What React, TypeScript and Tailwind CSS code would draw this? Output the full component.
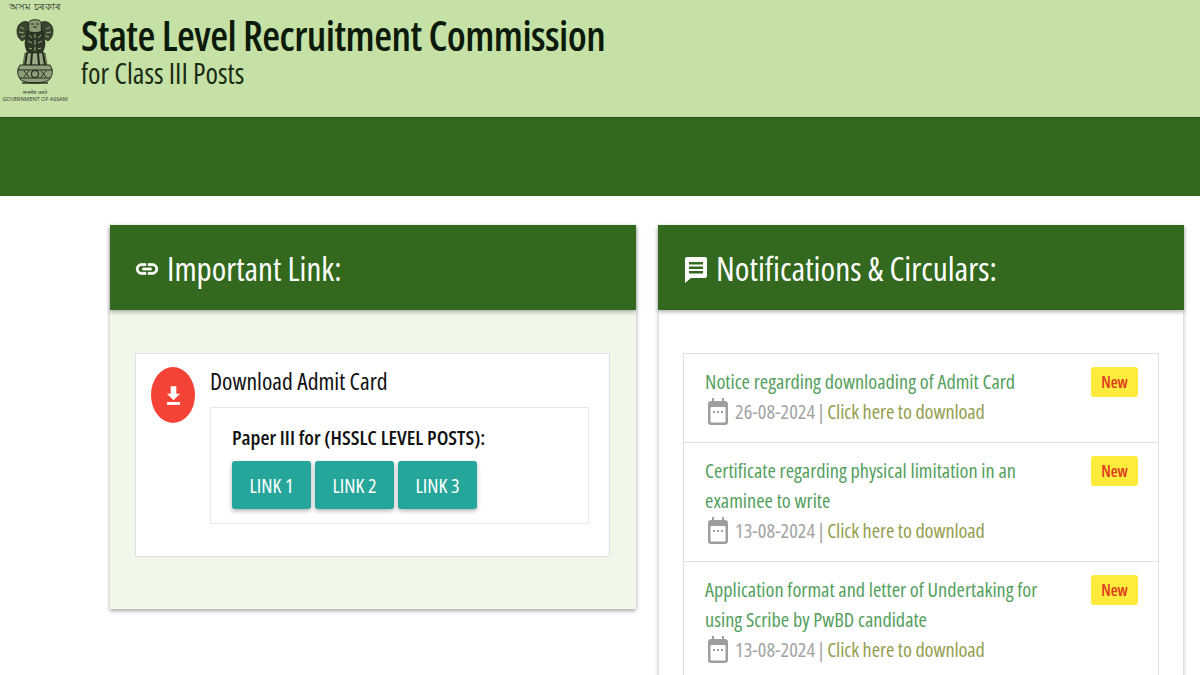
const notices = [
  { title: ["Notice regarding downloading of Admit Card"], date: "26-08-2024" },
  { title: ["Certificate regarding physical limitation in an", "examinee to write"], date: "13-08-2024" },
  { title: ["Application format and letter of Undertaking for", "using Scribe by PwBD candidate"], date: "13-08-2024" },
];

function Emblem() {
  return (
    <svg viewBox="0 0 38 70" className="w-[38px] h-[70px]" fill="none" stroke="#20291a">
      {/* lion heads */}
      <path d="M13 5c1-3 11-3 12 0l1 9-7 3-7-3z" fill="#8b9a76" strokeWidth="1" />
      <path d="M15 7h3M20 7h3M17 10h4" strokeWidth="1" />
      <path d="M12 5C6 3 1 8 1 14c0 5 2 8 5 10l6-4 1-9z" fill="#3a4530" strokeWidth="0.8" />
      <path d="M26 5c6-2 11 3 11 9 0 5-2 8-5 10l-6-4-1-9z" fill="#3a4530" strokeWidth="0.8" />
      <path d="M4 10l4 2M3 15l5 1M5 20l4-1M34 10l-4 2M35 15l-5 1M33 20l-4-1" stroke="#a9bb90" strokeWidth="0.8" />
      <path d="M11 14c2 2 14 2 16 0l2 12c0 4-2 8-3 11H12c-1-3-3-7-3-11z" fill="#2d3726" strokeWidth="0.8" />
      <path d="M13 18l3 3M19 17v4M25 18l-3 3M12 24l4 2M19 23v5M26 24l-4 2M13 31l3 1M19 30v4M25 31l-3 1" stroke="#a9bb90" strokeWidth="0.9" />
      {/* legs */}
      <path d="M9 36h20l2 12H7z" fill="#9aa986" strokeWidth="0.6" />
      <path d="M11 36L9 48M16 36l-1 12M22 36l1 12M27 36l2 12" strokeWidth="2" />
      {/* abacus */}
      <path d="M4 48h30l2 4c1 5-1 9-3 11-3 2-8 3-14 3S8 65 5 63c-2-2-4-6-3-11z" fill="#8f9e7b" strokeWidth="1" />
      <path d="M2 53h34M4 61h30" strokeWidth="1.2" />
      <path d="M8 54l5 6M30 54l-5 6M8 60l5-6M30 60l-5-6" strokeWidth="0.9" />
      <circle cx="19" cy="57" r="3.5" strokeWidth="1.1" />
      <path d="M6 66h26" strokeWidth="1.4" />
    </svg>
  );
}

function CalendarIcon() {
  return (
    <svg viewBox="0 0 20 27" className="w-[20px] h-[27px] shrink-0" fill="#9e9e9e">
      <path d="M4 0h2v3h8V0h2v3h1a3 3 0 0 1 3 3v18a3 3 0 0 1-3 3H3a3 3 0 0 1-3-3V6a3 3 0 0 1 3-3h1z" />
      <rect x="2.5" y="9" width="15" height="15.5" rx="1" fill="#fff" />
      <rect x="5" y="13" width="2" height="2" />
      <rect x="9" y="13" width="2" height="2" />
      <rect x="13" y="13" width="2" height="2" />
    </svg>
  );
}

export default function App() {
  return (
    <div className="w-[1200px] h-[675px] overflow-hidden bg-white font-['Open_Sans',sans-serif]">
      <header className="h-[117px] bg-[#c5e1a5] flex">
        <div className="w-[70px] shrink-0 flex flex-col items-center">
          <span className="text-[10px] leading-[13px] text-[#333] font-['Noto_Sans',sans-serif]">অসম চৰকাৰ</span>
          <div className="mt-[4px]"><Emblem /></div>
          <span className="text-[5px] leading-[6px] mt-[2px] text-[#333] font-['Noto_Sans',sans-serif]">सत्यमेव जयते</span>
          <span className="text-[5.5px] leading-[7px] mt-[1px] text-[#333] whitespace-nowrap [font-stretch:88%]">GOVERNMENT OF ASSAM</span>
        </div>
        <div className="pl-[11px] pt-[12px]">
          <h1 className="text-[41px] leading-[46px] tracking-[-0.57px] text-[#0c1a0a] font-[550] [font-stretch:82%] whitespace-nowrap">State Level Recruitment Commission</h1>
          <p className="text-[28.4px] leading-[30px] text-[#1a2a14] font-medium [font-stretch:82%]">for Class III Posts</p>
        </div>
      </header>
      <div className="h-[79px] bg-[#33691e] border-t border-[#24500f]" />

      <main className="flex items-start gap-[22px] pl-[110px] pt-[29px]">
        <section className="w-[526px] h-[384px] bg-[#f1f8e9] shadow-[0_2px_4px_rgba(0,0,0,0.35)]">
          <div className="h-[85px] bg-[#33691e] shadow-[0_2px_4px_rgba(0,0,0,0.3)] flex items-center pl-[25px] text-white">
            <svg viewBox="0 0 24 24" className="w-[26px] h-[26px] -ml-[1px] mt-[3px]" fill="currentColor" stroke="currentColor" strokeWidth="0.6">
              <path d="M3.9 12c0-1.71 1.39-3.1 3.1-3.1h4V7H7c-2.76 0-5 2.24-5 5s2.24 5 5 5h4v-1.9H7c-1.71 0-3.1-1.39-3.1-3.1zM8 13h8v-2H8v2zm9-6h-4v1.9h4c1.71 0 3.1 1.39 3.1 3.1s-1.39 3.1-3.1 3.1h-4V17h4c2.76 0 5-2.24 5-5s-2.24-5-5-5z" />
            </svg>
            <h2 className="ml-[7px] mt-[2px] text-[33px] leading-[40px] font-medium [font-stretch:82%]">Important Link:</h2>
          </div>
          <div className="mt-[43px] mx-[25px] w-[475px] h-[204px] bg-white border border-[#e0e0e0] pl-[15px] pr-[20px] pt-[13px] flex">
            <div className="w-[44px] h-[56px] rounded-[50%] bg-[#f44336] flex items-center justify-center shrink-0">
              <svg viewBox="0 0 16 20" className="w-[15px] h-[19px]" fill="#fff">
                <path d="M5 0h6v8h4l-7 7-7-7h4z" />
                <rect x="1" y="17" width="14" height="3" />
              </svg>
            </div>
            <div className="ml-[15px] flex-1">
              <h3 className="text-[23.6px] leading-[30px] text-[#111] font-medium [font-stretch:82%] -mt-px">Download Admit Card</h3>
              <div className="mt-[11px] h-[117px] border border-[#e8e8e8] pl-[21px] pt-[16px]">
                <p className="text-[20.6px] leading-[26px] font-semibold text-[#111] [font-stretch:82%]">Paper III for (HSSLC LEVEL POSTS):</p>
                <div className="mt-[11px] flex gap-[4px]">
                  {["LINK 1", "LINK 2", "LINK 3"].map((label) => (
                    <button key={label} className="w-[79px] h-[48px] pt-px rounded-[3px] bg-[#26a69a] text-white text-[20px] [font-stretch:82%] shadow-[0_2px_4px_rgba(0,0,0,0.3)]">{label}</button>
                  ))}
                </div>
              </div>
            </div>
          </div>
        </section>

        <section className="w-[526px] h-[500px] bg-white border-x border-[#e0e0e0] shadow-[0_2px_4px_rgba(0,0,0,0.2)]">
          <div className="-mx-px h-[85px] bg-[#33691e] shadow-[0_2px_4px_rgba(0,0,0,0.3)] flex items-center pl-[27px] text-white">
            <svg viewBox="0 0 22 26" className="w-[22px] h-[26px] mt-[5px]" fill="currentColor">
              <path d="M2 0h18a2 2 0 0 1 2 2v17a2 2 0 0 1-2 2H6l-6 5V2a2 2 0 0 1 2-2z" />
              <path d="M4 5h14v2.5H4zM4 9.5h14V12H4zM4 14h14v2.5H4z" fill="#33691e" />
            </svg>
            <h2 className="ml-[9px] mt-px text-[33.4px] leading-[40px] font-medium [font-stretch:82%]">Notifications &amp; Circulars:</h2>
          </div>
          <ul className="mt-[43px] mx-[24px] w-[476px] border border-[#e0e0e0]">
            {notices.map((n, i) => (
              <li key={i} className="flex justify-between pl-[21px] pr-[20px] pt-[12px] pb-[16px] border-b border-[#e0e0e0] last:border-b-0">
                <div>
                  {n.title.map((line) => (
                    <p key={line} className="text-[20.3px] leading-[30px] text-[#559f5e] [font-stretch:82%] whitespace-nowrap">{line}</p>
                  ))}
                  <p className="flex items-center gap-[7px] h-[30px] text-[20.3px] [font-stretch:82%] pl-[3px] whitespace-nowrap">
                    <CalendarIcon />
                    <span className="text-[#a3a3a3] flex gap-[2px]">
                      <span>{n.date}</span>
                      <span>|</span>
                      <span className="text-[#949e4e] tracking-[-0.1px]">Click here to download</span>
                    </span>
                  </p>
                </div>
                <span className="mt-px h-[30px] w-[47px] rounded-[3px] bg-[#ffeb3b] text-[#dd3b1f] text-[16px] font-semibold [font-stretch:82%] flex items-center justify-center">New</span>
              </li>
            ))}
          </ul>
        </section>
      </main>
    </div>
  );
}
